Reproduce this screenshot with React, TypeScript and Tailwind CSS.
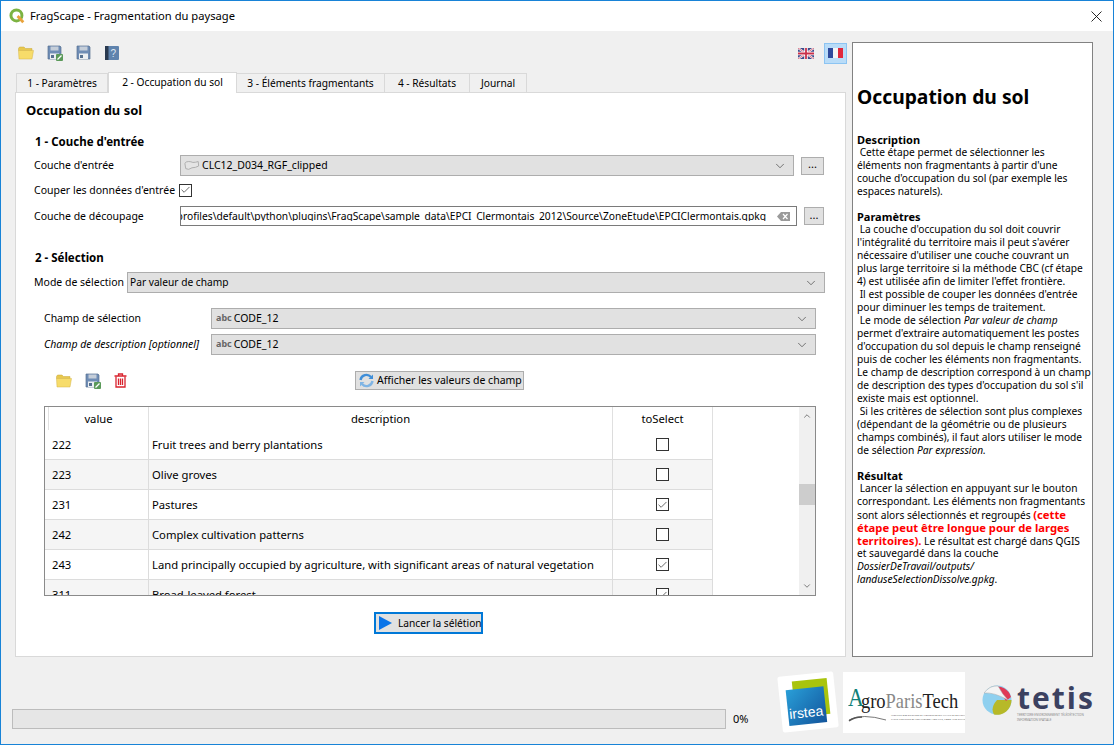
import React from "react";
import { ChevronDown, ChevronUp, Check } from "lucide-react";

const font = "font-['Noto_Sans','Open_Sans',sans-serif]";

function FolderIcon() {
    return (
        <svg width="16" height="14" viewBox="0 0 16 14">
            <path d="M0.5 2.5 L1.5 1 H6 L7.5 2.5 H14 V4.5 H0.5 Z" fill="#e8c84e" stroke="#c9a83a" strokeWidth="0.5" />
            <path d="M0.5 4.5 H15.5 L14 13 H1 Z" fill="#f7dc6a" stroke="#d4b548" strokeWidth="0.5" />
        </svg>
    );
}

function SaveIcon({ edit }: { edit?: boolean }) {
    return (
        <svg width="16" height="16" viewBox="0 0 16 16">
            <path d="M1 1 H13 L14 2 V14 H1 Z" fill="#6f8db5" stroke="#56708f" strokeWidth="0.7" />
            <rect x="3.5" y="1.5" width="8" height="4" fill="#c5ced9" />
            <rect x="3" y="8.5" width="9" height="5.5" fill="#eceff2" />
            <rect x="4" y="10" width="3" height="3" fill="#56708f" />
            {edit && (
                <>
                    <rect x="9" y="9" width="7" height="7" rx="1" fill="#5b9a5a" />
                    <path d="M10.5 14.5 L14.5 10.5" stroke="#fff" strokeWidth="1.3" />
                </>
            )}
        </svg>
    );
}

function HelpBook() {
    return (
        <svg width="14" height="14" viewBox="0 0 14 14">
            <rect x="0" y="0" width="14" height="14" rx="1" fill="#5f83ad" />
            <rect x="0" y="0" width="3.5" height="14" fill="#2a3a50" />
            <text x="5.5" y="11" fontSize="10" fill="#dfe8f2" fontFamily="Liberation Sans">?</text>
        </svg>
    );
}

function TrashIcon() {
    return (
        <svg width="13" height="15" viewBox="0 0 13 15" fill="none" stroke="#d9232e" strokeWidth="1.3">
            <path d="M0.5 3 H12.5 M4.5 3 V1 H8.5 V3" />
            <path d="M2 3.5 V14 H11 V3.5" />
            <path d="M4.5 5.5 V12 M6.5 5.5 V12 M8.5 5.5 V12" />
        </svg>
    );
}

function Combo({ children, className, pad = "pl-[4px]" }: { children: React.ReactNode; className: string; pad?: string }) {
    return (
        <div className={`flex items-center h-[21px] bg-[#e1e1e1] border border-[#adadad] pr-[6px] ${pad} ${className}`}>
            <div className="flex-1 flex items-center gap-[2px] whitespace-nowrap overflow-hidden">{children}</div>
            <ChevronDown size={14} strokeWidth={1.2} className="text-[#444]" />
        </div>
    );
}

function AbcTag() {
    return <span className="text-[9px] font-bold text-[#666] leading-none mb-[3px]">abc</span>;
}

function DotsButton({ className }: { className: string }) {
    return (
        <div className={`h-[18px] bg-[#e1e1e1] border border-[#adadad] flex items-center justify-center text-[11px] leading-none pb-[4px] ${className}`}>
            ...
        </div>
    );
}

function Box({ on }: { on: boolean }) {
    return (
        <div className="w-[13px] h-[13px] bg-white border border-[#333] flex items-center justify-center">
            {on && <Check size={12} strokeWidth={1.6} className="text-[#333]" />}
        </div>
    );
}

const rows = [
    { value: "222", description: "Fruit trees and berry plantations", on: false },
    { value: "223", description: "Olive groves", on: false },
    { value: "231", description: "Pastures", on: true },
    { value: "242", description: "Complex cultivation patterns", on: false },
    { value: "243", description: "Land principally occupied by agriculture, with significant areas of natural vegetation", on: true },
    { value: "311", description: "Broad-leaved forest", on: true },
];

const tabs = [
    { label: "1 - Paramètres", width: "w-[92px]" },
    { label: "2 - Occupation du sol", width: "w-[129px]" },
    { label: "3 - Éléments fragmentants", width: "w-[148px]" },
    { label: "4 - Résultats", width: "w-[85px]" },
    { label: "Journal", width: "w-[57px]" },
];

function Flags() {
    return (
        <div className="flex items-center gap-[10px] -mr-[1px]">
            <svg width="16" height="11" viewBox="0 0 16 11">
                <rect width="16" height="11" fill="#3d4a8a" />
                <path d="M0 0 L16 11 M16 0 L0 11" stroke="#fff" strokeWidth="2" />
                <path d="M0 0 L16 11 M16 0 L0 11" stroke="#c9304a" strokeWidth="0.7" />
                <path d="M8 0 V11 M0 5.5 H16" stroke="#fff" strokeWidth="3.5" />
                <path d="M8 0 V11 M0 5.5 H16" stroke="#c9304a" strokeWidth="1.8" />
            </svg>
            <div className="w-[23px] h-[21px] bg-[#b9dcf8] border border-[#8cc4f2] flex items-center justify-center">
                <div className="flex w-[16px] h-[10px]">
                    <div className="flex-1 bg-[#2e4a9c]" />
                    <div className="flex-1 bg-[#f4f4f4]" />
                    <div className="flex-1 bg-[#e0283c]" />
                </div>
            </div>
        </div>
    );
}

function Logos() {
    return (
        <div className="flex items-start">
            {/* irstea */}
            <div className="w-[56px] h-[56px] mt-[2px] bg-white rotate-[-6deg] rounded-[2px] flex items-center justify-center mr-[7px]">
                <div className="relative w-[42px] h-[44px]">
                    <div className="absolute right-0 top-0 w-[35px] h-[36px] bg-[#a9c40d]" />
                    <div className="absolute left-0 bottom-0 w-[38px] h-[36px] bg-gradient-to-br from-[#2a9fd8] to-[#14559c]" />
                    <span className="absolute left-[1px] bottom-[5px] text-[14px] leading-none text-white font-['Liberation_Sans']">irstea</span>
                </div>
            </div>
            {/* AgroParisTech */}
            <div className="w-[122px] h-[61px] bg-white flex flex-col items-start pl-[5px] pt-[17px] mr-[17px] overflow-hidden">
                <div className="flex items-end h-[22px] scale-y-[1.15] origin-bottom">
                    <span className="text-[22px] text-[#0f7f78] font-['Liberation_Serif'] leading-none -mr-[3px]">A</span>
                    <span className="text-[18.5px] text-[#222] font-['Liberation_Serif'] leading-none">gro</span>
                    <span className="text-[18.5px] text-[#888] font-['Liberation_Serif'] leading-none">Paris</span>
                    <span className="text-[18.5px] text-[#222] font-['Liberation_Serif'] leading-none">Tech</span>
                </div>
                <div className="flex items-start mt-[3px] w-full">
                    <svg width="40" height="8" viewBox="0 0 40 8" fill="none" stroke="#555" strokeWidth="0.8" className="shrink-0">
                        <path d="M1 6 Q14 -1 38 6" />
                        <path d="M1 7 Q6 3 14 3" strokeWidth="1.5" />
                    </svg>
                    <div className="ml-[3px] text-[2.5px] leading-[3.5px] text-[#666] whitespace-nowrap">
                        <div>INSTITUT DES SCIENCES ET INDUSTRIES DU VIVANT ET DE L'ENVIRONNEMENT</div>
                        <div>PARIS INSTITUTE OF TECHNOLOGY FOR LIFE, FOOD AND ENVIRONMENTAL SCIENCES</div>
                    </div>
                </div>
            </div>
            {/* tetis */}
            <div className="flex items-start w-[100px] pt-[12px]">
                <svg width="30" height="32" viewBox="0 0 30 32" className="shrink-0">
                    <circle cx="15" cy="16" r="14.5" fill="#8fd0ef" />
                    <path d="M15 16 L29.500 16 A14.500 14.500 0 0 1 12 30.500 Q8 24 15 16 Z" fill="#b7b928" />
                    <path d="M12 3 A14 14 0 0 1 29 13 L24 17 Q18 8 12 3 Z" fill="#e03a56" />
                    <path d="M2 9 Q8 1 16 2 Q20 10 26 16 Q12 8 2 9 Z" fill="#f4f4f4" stroke="#aaa" strokeWidth="0.5" />
                </svg>
                <div className="ml-[5px] flex flex-col">
                    <span className="text-[30px] leading-[30px] -mt-[1.5px] tracking-[2px] font-bold text-[#3b4160] font-['Open_Sans']">tetis</span>
                    <span className="text-[3px] leading-[5px] text-[#888] whitespace-nowrap">TERRITOIRE ENVIRONNEMENT TÉLÉDÉTECTION</span>
                    <span className="text-[3px] leading-[5px] text-[#888] whitespace-nowrap">INFORMATION SPATIALE</span>
                </div>
            </div>
        </div>
    );
}

function HelpLines({ lines }: { lines: React.ReactNode[] }) {
    return (
        <>
            {lines.map((l, i) => (
                <div key={i} className="h-[13px] whitespace-pre">{l}</div>
            ))}
        </>
    );
}

export default function App() {
    return (
        <div className={`w-[1114px] h-[745px] flex flex-col bg-[#f0f0f0] border border-[#1883d7] text-[10.5px] leading-none text-black overflow-hidden ${font}`}>
            <div className="h-[30px] bg-white flex items-center shrink-0 pl-[8px] pr-[11px]">
                <svg width="16" height="16" viewBox="0 0 14 14" fill="none">
                    <circle cx="6.5" cy="6.5" r="4.8" stroke="#7cb342" strokeWidth="2.6" />
                    <path d="M7.5 7 L12.5 12.5" stroke="#e8a23a" strokeWidth="2.4" />
                </svg>
                <span className="ml-[5px] text-[11.2px]">FragScape - Fragmentation du paysage</span>
                <svg width="11" height="11" viewBox="0 0 11 11" className="ml-auto" stroke="#111" strokeWidth="0.9">
                    <path d="M0.5 0.5 L10.5 10.5 M10.5 0.5 L0.5 10.5" />
                </svg>
            </div>

            <div className="flex-1 flex flex-col px-[14px] pt-[11px]">
                <div className="flex gap-[6px] h-[615px] shrink-0">
                    <div className="w-[831px] flex flex-col">
                        <div className="h-[22px] flex items-center justify-between pl-[3px]">
                            <div className="flex items-center gap-[13px]">
                                <FolderIcon />
                                <SaveIcon edit />
                                <SaveIcon />
                                <HelpBook />
                            </div>
                            <Flags />
                        </div>
                        <div className="h-[7px]" />
                        <div className="flex items-end h-[21px] pl-[1px] text-[10.2px]">
                            {tabs.map((t, i) => (
                                <div
                                    key={t.label}
                                    className={
                                        i === 1
                                            ? `${t.width} h-[21px] bg-white border border-b-0 border-[#d9d9d9] flex items-center justify-center -mb-[1px] relative z-10 pb-[2px]`
                                            : `${t.width} h-[19px] bg-[#f0f0f0] border border-b-0 border-l-0 first:border-l border-[#d9d9d9] flex items-center justify-center`
                                    }
                                >
                                    {t.label}
                                </div>
                            ))}
                        </div>
                        <div className="flex-1 h-0 bg-white border border-[#d9d9d9] flex flex-col pl-[10px]">
                            <div className="h-[25px] flex items-end text-[13px] font-bold pb-[1px]">Occupation du sol</div>
                            <div className="h-[18px]" />
                            <div className="pl-[9px] font-bold text-[11.5px] h-[12px] flex items-center">1 - Couche d'entrée</div>
                            <div className="h-[7px]" />

                            <div className="flex items-center pl-[8px]">
                                <span className="w-[146px] whitespace-nowrap">Couche d'entrée</span>
                                <Combo className="w-[614px]" pad="pl-[3px]">
                                    <svg width="16" height="12" viewBox="0 0 18 12" fill="#e4e4e4" stroke="#a8a8a8" strokeWidth="1">
                                        <path d="M1 3 Q2 1 5 1 Q8 1 10 2 Q13 2 16 1 L16.500 6 Q13 8 9 8 Q5 11 2 9 Z" />
                                    </svg>
                                    CLC12_D034_RGF_clipped
                                </Combo>
                                <DotsButton className="w-[23px] ml-[7px]" />
                            </div>
                            <div className="h-[6px]" />
                            <div className="flex items-center pl-[8px] h-[16px]">
                                <span className="w-[145px] whitespace-nowrap">Couper les données d'entrée</span>
                                <Box on />
                            </div>
                            <div className="h-[8px]" />
                            <div className="flex items-center pl-[8px]">
                                <span className="w-[146px] whitespace-nowrap">Couche de découpage</span>
                                <div className="w-[617px] h-[20px] bg-white border border-[#7a7a7a] flex items-center overflow-hidden pr-[6px]">
                                    <span className="flex-1 overflow-hidden whitespace-nowrap flex justify-end text-[10.25px]">
                                        profiles\default\python\plugins\FragScape\sample_data\EPCI_Clermontais_2012\Source\ZoneEtude\EPCIClermontais.gpkg
                                    </span>
                                    <svg width="13" height="9" viewBox="0 0 13 9" className="ml-[11px] shrink-0">
                                        <path d="M0 4.500 L4 0 H13 V9 H4 Z" fill="#9a9a9a" />
                                        <path d="M6 2 L10.500 7 M10.500 2 L6 7" stroke="#fff" strokeWidth="1.200" />
                                    </svg>
                                </div>
                                <DotsButton className="w-[20px] ml-[7px]" />
                            </div>

                            <div className="h-[26px]" />
                            <div className="pl-[9px] font-bold text-[11.5px] h-[12px] flex items-center">2 - Sélection</div>
                            <div className="h-[8px]" />
                            <div className="flex items-center pl-[8px]">
                                <span className="w-[93px] whitespace-nowrap">Mode de sélection</span>
                                <Combo className="w-[698px] text-[10.2px]" pad="pl-[2px]">Par valeur de champ</Combo>
                            </div>
                            <div className="h-[15px]" />
                            <div className="flex items-center pl-[18px]">
                                <span className="w-[167px] whitespace-nowrap">Champ de sélection</span>
                                <Combo className="w-[605px]"><AbcTag />CODE_12</Combo>
                            </div>
                            <div className="h-[5px]" />
                            <div className="flex items-center pl-[18px]">
                                <span className="w-[167px] italic whitespace-nowrap">Champ de description [optionnel]</span>
                                <Combo className="w-[605px]"><AbcTag />CODE_12</Combo>
                            </div>

                            <div className="h-[16px] shrink-0" />
                            <div className="flex items-center h-[19px] pl-[30px]">
                                <div className="flex items-center gap-[13px] w-[299px]">
                                    <FolderIcon />
                                    <SaveIcon edit />
                                    <TrashIcon />
                                </div>
                                <div className="h-[19px] pl-[3px] pr-[1px] bg-[#e1e1e1] border border-[#adadad] flex items-center gap-[3px]">
                                    <svg width="15" height="15" viewBox="0 0 15 15" fill="none" strokeWidth="2.400">
                                        <path d="M1.500 7 A6 6 0 0 1 12 4" stroke="#3f8ed8" />
                                        <path d="M13.500 8 A6 6 0 0 1 3 11" stroke="#7fb4e4" />
                                        <path d="M9.500 6 H14 V1.500 Z" fill="#3f8ed8" />
                                        <path d="M5.500 9 H1 V13.500 Z" fill="#7fb4e4" />
                                    </svg>
                                    <span className="whitespace-nowrap">Afficher les valeurs de champ</span>
                                </div>
                            </div>

                            <div className="h-[16px] shrink-0" />
                            <div className="ml-[18px] w-[772px] h-[190px] border border-[#8a8a8a] flex bg-white overflow-hidden shrink-0 text-[11.25px]">
                                <div className="flex-1 flex flex-col overflow-hidden">
                                    <div className="flex h-[23px] shrink-0 items-center">
                                        <div className="w-[4px] h-full border-r border-[#e0e0e0]" />
                                        <div className="w-[100px] text-center border-r border-[#e0e0e0] h-full flex items-center justify-center">value</div>
                                        <div className="w-[464px] border-r border-[#e0e0e0] h-full flex items-center justify-center relative">
                                            description
                                            <ChevronUp size={9} strokeWidth={1} className="absolute top-[0px] left-[227px] rotate-180 text-[#888]" />
                                        </div>
                                        <div className="w-[100px] border-r border-[#e0e0e0] h-full flex items-center justify-center">toSelect</div>
                                    </div>
                                    {rows.map((r, i) => (
                                        <div key={r.value} className="flex h-[30px] shrink-0 items-center">
                                            <div className="w-[668px] flex h-full border-b border-[#dcdcdc] shrink-0">
                                                <div className={`w-[104px] h-full flex items-center pl-[7px] border-r border-[#dcdcdc] ${i % 2 ? "bg-[#f5f5f5]" : ""}`}>{r.value}</div>
                                                <div className={`w-[464px] h-full flex items-center pl-[3px] border-r border-[#dcdcdc] ${i % 2 ? "bg-[#f5f5f5]" : ""}`}>{r.description}</div>
                                                <div className={`w-[100px] h-full flex items-center justify-center border-r border-[#dcdcdc] ${i % 2 ? "bg-[#f5f5f5]" : ""}`}>
                                                    <Box on={r.on} />
                                                </div>
                                            </div>
                                        </div>
                                    ))}
                                </div>
                                <div className="w-[16px] bg-[#f0f0f0] flex flex-col items-center justify-between py-[4px] shrink-0 relative">
                                    <ChevronUp size={10} strokeWidth={2} className="text-[#666]" />
                                    <div className="absolute left-0 top-[77px] w-full h-[21px] bg-[#cdcdcd]" />
                                    <ChevronDown size={10} strokeWidth={2} className="text-[#666]" />
                                </div>
                            </div>

                            <div className="h-[16px] shrink-0" />
                            <div className="self-center -ml-[14px] w-[109px] h-[22px] bg-[#e1e1e1] border-2 border-[#0078d7] flex items-center pl-[3px] gap-[6px] text-[10.2px]">
                                <svg width="13" height="14" viewBox="0 0 13 14" className="shrink-0">
                                    <path d="M0 0 L13 7 L0 14 Z" fill="#0a74e8" />
                                </svg>
                                <span className="whitespace-nowrap">Lancer la sélétion</span>
                            </div>
                        </div>
                    </div>

                    <div className="w-[241px] h-[615px] bg-white border border-[#828282] pl-[4px] pt-[41px] overflow-hidden text-[10.2px]">
                        <div className="text-[19.3px] font-bold h-[25px] flex items-center whitespace-nowrap">Occupation du sol</div>
                        <div className="h-[25px]" />
                        <div className="h-[13px] text-[11px] font-bold whitespace-nowrap">Description</div>
                        <HelpLines lines={[
                            " Cette étape permet de sélectionner les",
                            "éléments non fragmentants à partir d'une",
                            "couche d'occupation du sol (par exemple les",
                            "espaces naturels).",
                        ]} />
                        <div className="h-[12px]" />
                        <div className="h-[13px] text-[11px] font-bold whitespace-nowrap">Paramètres</div>
                        <HelpLines lines={[
                            " La couche d'occupation du sol doit couvrir",
                            "l'intégralité du territoire mais il peut s'avérer",
                            "nécessaire d'utiliser une couche couvrant un",
                            "plus large territoire si la méthode CBC (cf étape",
                            "4) est utilisée afin de limiter l'effet frontière.",
                            " Il est possible de couper les données d'entrée",
                            "pour diminuer les temps de traitement.",
                            <> Le mode de sélection <i>Par valeur de champ</i></>,
                            "permet d'extraire automatiquement les postes",
                            "d'occupation du sol depuis le champ renseigné",
                            "puis de cocher les éléments non fragmentants.",
                            "Le champ de description correspond à un champ",
                            "de description des types d'occupation du sol s'il",
                            "existe mais est optionnel.",
                            " Si les critères de sélection sont plus complexes",
                            "(dépendant de la géométrie ou de plusieurs",
                            "champs combinés), il faut alors utiliser le mode",
                            <>de sélection <i>Par expression.</i></>,
                        ]} />
                        <div className="h-[12px]" />
                        <div className="h-[13px] text-[11px] font-bold whitespace-nowrap">Résultat</div>
                        <HelpLines lines={[
                            " Lancer la sélection en appuyant sur le bouton",
                            "correspondant. Les éléments non fragmentants",
                            <>sont alors sélectionnés et regroupés <b className="text-[#ff0000] text-[11.25px]">(cette</b></>,
                            <b className="text-[#ff0000] text-[11.25px]">étape peut être longue pour de larges</b>,
                            <><b className="text-[#ff0000] text-[11.25px]">territoires).</b> Le résultat est chargé dans QGIS</>,
                            "et sauvegardé dans la couche",
                            <i>DossierDeTravail/outputs/</i>,
                            <><i>landuseSelectionDissolve.gpkg</i>.</>,
                        ]} />
                    </div>
                </div>

                <div className="flex-1 flex items-start -ml-[3px] -mr-[3px]">
                    <div className="w-[714px] h-[20px] shrink-0 bg-[#e6e6e6] border border-[#bcbcbc] mt-[52px]" />
                    <span className="ml-[7px] mt-[56px] text-[11px]">0%</span>
                    <div className="ml-auto mr-[20px] mt-[15px]"><Logos /></div>
                </div>
            </div>
        </div>
    );
}
